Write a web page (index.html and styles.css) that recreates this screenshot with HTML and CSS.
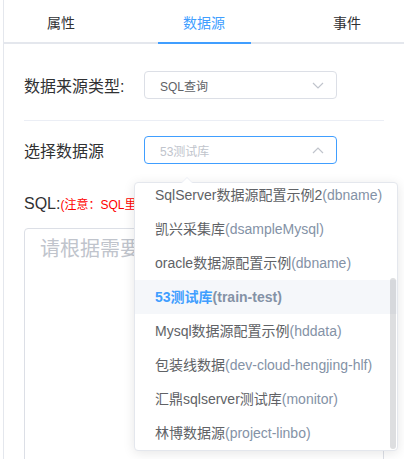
FILE: index.html
```html
<!DOCTYPE html>
<html lang="zh-CN">
<head>
  <meta charset="UTF-8">
  <meta name="viewport" content="width=device-width, initial-scale=1.0">
  <title>数据源配置</title>
  <link rel="stylesheet" href="styles.css">
</head>
<body>
  <div class="panel">
    <!-- 顶部标签 -->
    <div class="tabs">
      <div class="tab">属性</div>
      <div class="tab active">数据源</div>
      <div class="tab">事件</div>
    </div>

    <div class="form">
      <div class="form-row first">
        <label class="form-label">数据来源类型:</label>
        <div class="select">
          <span class="select-value">SQL查询</span>
          <svg class="arrow" width="12" height="7" viewBox="0 0 12 7"><path d="M1 1 L6 6 L11 1" fill="none" stroke="#c0c4cc" stroke-width="1.2"/></svg>
        </div>
      </div>

      <div class="divider"></div>

      <div class="form-row">
        <label class="form-label">选择数据源</label>
        <div class="select focused">
          <span class="select-value placeholder">53测试库</span>
          <svg class="arrow" width="12" height="7" viewBox="0 0 12 7"><path d="M1 6 L6 1 L11 6" fill="none" stroke="#c0c4cc" stroke-width="1.2"/></svg>
        </div>
      </div>

      <div class="sql-title">SQL:<span class="sql-note">(注意：SQL里的参数请使用${参数名}的形式)</span></div>
      <textarea class="sql-input" placeholder="请根据需要输入SQL语句"></textarea>
    </div>

    <!-- 下拉选项 -->
    <div class="dropdown">
      <span class="dropdown-arrow"></span>
      <div class="dropdown-wrap">
        <ul class="dropdown-list">
          <li>SqlServer数据源配置示例2<span class="code">(dbname)</span></li>
          <li>凯兴采集库<span class="code">(dsampleMysql)</span></li>
          <li>oracle数据源配置示例<span class="code">(dbname)</span></li>
          <li class="selected">53测试库<span class="code">(train-test)</span></li>
          <li>Mysql数据源配置示例<span class="code">(hddata)</span></li>
          <li>包装线数据<span class="code">(dev-cloud-hengjing-hlf)</span></li>
          <li>汇鼎sqlserver测试库<span class="code">(monitor)</span></li>
          <li>林博数据源<span class="code">(project-linbo)</span></li>
        </ul>
      </div>
      <div class="scroll-thumb"></div>
    </div>
  </div>
</body>
</html>
```

FILE: styles.css
```css
body {
  margin: 0;
  padding: 0;
  background-color: #fff;
  font-family: "Liberation Sans", Arial, "Noto Sans CJK SC", sans-serif;
  color: #303133;
  overflow: hidden;
}
.panel {
  position: relative;
  margin-left: 3px;
  border-left: 1px solid #e4e7ed;
  height: 100vh;
}
.tabs {
  display: flex;
  justify-content: center;
  gap: 50px;
  padding-top: 5px;
  border-bottom: 2px solid #e4e7ed;
}
.tab {
  width: 93px;
  line-height: 37px;
  text-align: center;
  font-size: 14px;
  color: #303133;
  margin-bottom: -2px;
  border-bottom: 2px solid transparent;
}
.tab.active {
  color: #409eff;
  border-bottom-color: #409eff;
}
.form {
  padding: 0 20px;
}
.form-row {
  display: flex;
  align-items: center;
  margin-top: 15px;
}
.form-row.first {
  margin-top: 27px;
}
.form-label {
  width: 120px;
  font-size: 16px;
  color: #303133;
}
.select {
  width: 193px;
  height: 28px;
  box-sizing: border-box;
  border: 1px solid #dcdfe6;
  border-radius: 4px;
  display: flex;
  align-items: center;
  justify-content: space-between;
  padding: 0 12px 0 15px;
}
.select.focused {
  border-color: #409eff;
}
.select-value {
  font-size: 12px;
  color: #606266;
}
.select-value.placeholder {
  color: #c0c4cc;
}
.arrow {
  display: block;
}
.divider {
  height: 1px;
  background-color: #ebeef5;
  margin-top: 21px;
}
.sql-title {
  margin-top: 28px;
  font-size: 16px;
  line-height: 24px;
  white-space: nowrap;
  color: #303133;
}
.sql-note {
  font-size: 12px;
  color: #f00;
}
.sql-input {
  display: block;
  margin-top: 11px;
  width: 100%;
  height: 300px;
  box-sizing: border-box;
  padding: 5px 15px;
  border: 1px solid #dcdfe6;
  border-radius: 4px;
  font-family: "Liberation Sans", Arial, "Noto Sans CJK SC", sans-serif;
  font-size: 20px;
  line-height: 1.5;
  resize: none;
  outline: none;
}
.sql-input::placeholder {
  color: #c0c4cc;
}
.dropdown {
  position: absolute;
  left: 130px;
  top: 182px;
  width: 264px;
  height: 269px;
  box-sizing: border-box;
  background-color: #fff;
  border: 1px solid #e4e7ed;
  border-radius: 4px;
  box-shadow: 0 2px 12px rgba(0, 0, 0, 0.1);
}
.dropdown-arrow,
.dropdown-arrow::after {
  position: absolute;
  width: 0;
  height: 0;
  border: 6px solid transparent;
  border-top-width: 0;
}
.dropdown-arrow {
  top: -6px;
  left: 46px;
  border-bottom-color: #ebeef5;
}
.dropdown-arrow::after {
  content: "";
  top: 1px;
  left: -6px;
  border-bottom-color: #fff;
}
.dropdown-wrap {
  height: 100%;
  overflow: hidden;
}
.dropdown-list {
  list-style: none;
  margin: -11px 0 0;
  padding: 6px 0;
}
.dropdown-list li {
  height: 34px;
  line-height: 34px;
  padding: 0 20px;
  font-size: 14px;
  color: #606266;
  white-space: nowrap;
  overflow: hidden;
}
.dropdown-list .code {
  color: #8492a6;
}
.dropdown-list li.selected {
  background-color: #f5f7fa;
  color: #409eff;
  font-weight: bold;
}
.scroll-thumb {
  position: absolute;
  right: 1px;
  top: 95px;
  width: 6px;
  height: 171px;
  border-radius: 3px;
  background-color: rgba(144, 147, 153, 0.3);
}
```
